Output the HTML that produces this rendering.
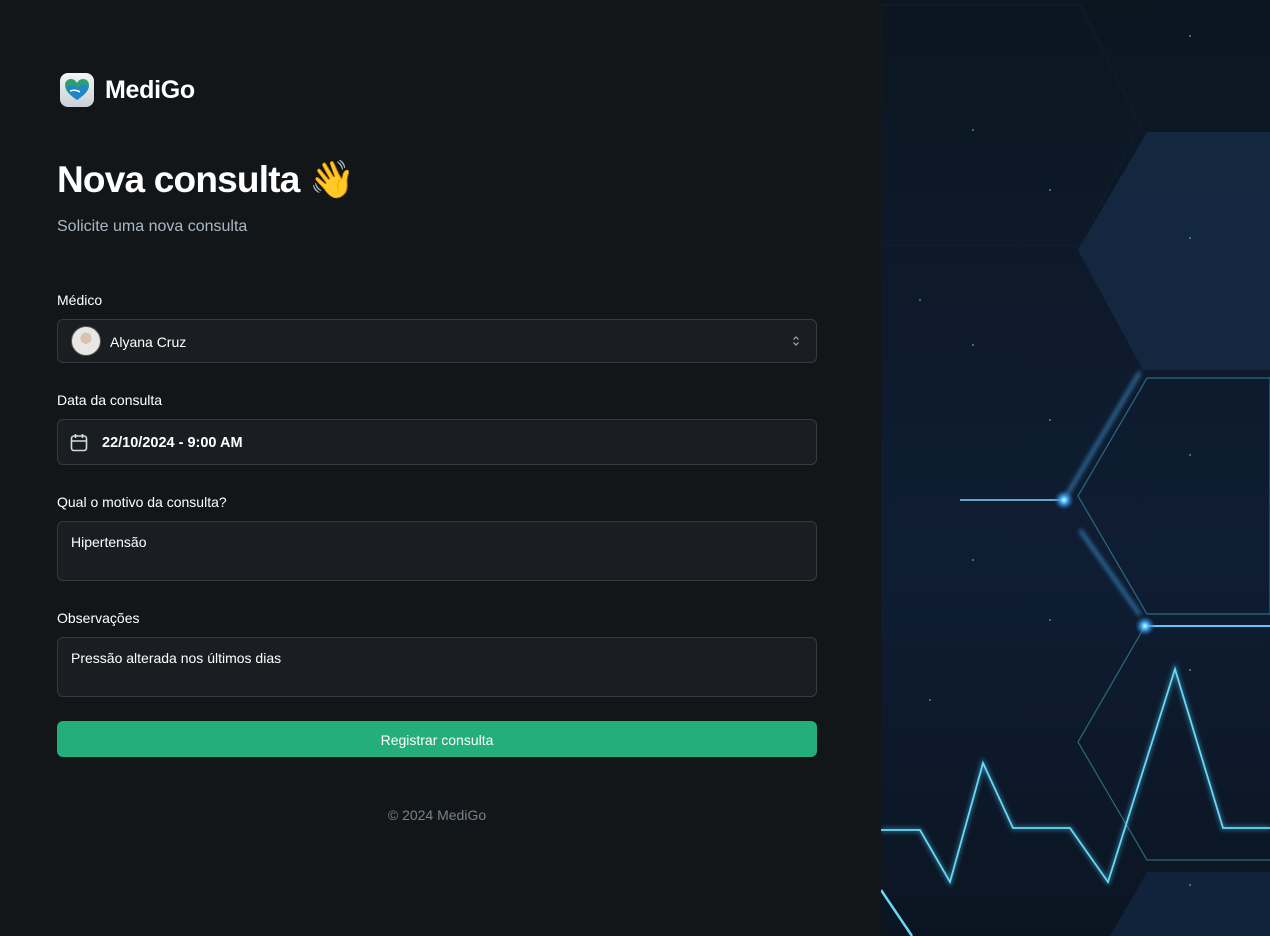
<!DOCTYPE html>
<html><head><meta charset="utf-8">
<style>
*{box-sizing:border-box;margin:0;padding:0}
html,body{width:1270px;height:936px;overflow:hidden}
body{background:#131619;font-family:"Liberation Sans",sans-serif;color:#fff;position:relative}
.left{position:absolute;left:0;top:0;width:881px;height:936px;background:#131619}
.logo{position:absolute;left:60px;top:73px;display:flex;align-items:center}
.logo .ic{width:34px;height:34px;border-radius:8px;background:linear-gradient(#f4f6f8,#c9d0d6);display:flex;align-items:center;justify-content:center}
.logo span{font-size:25px;font-weight:bold;margin-left:11px;letter-spacing:-0.3px}
h1{position:absolute;left:57px;top:159px;font-size:37px;font-weight:bold;letter-spacing:-0.8px}
.sub{position:absolute;left:57px;top:218px;font-size:16px;color:#abb8c4}
.lbl{position:absolute;left:57px;font-size:14px;color:#fff;font-weight:500}
.box{position:absolute;left:57px;width:760px;background:#1a1d21;border:1px solid #363a3d;border-radius:6px;font-size:14px;color:#fff}
.btn{position:absolute;left:57px;top:721px;width:760px;height:36px;background:#24ae7c;border-radius:6px;font-size:14px;display:flex;align-items:center;justify-content:center;padding-top:2px}
.foot{position:absolute;left:0;width:874px;top:807px;text-align:center;font-size:14px;color:#76828d}
.right{position:absolute;left:881px;top:0;width:389px;height:936px;background:#0d1a2a}
</style></head><body>
<div class="left">
<div class="logo"><div class="ic"><svg width="26" height="24" viewBox="0 0 26 24"><path d="M13 22 C6 17 1 13 1 7 C1 3 4 1 7 1 C10 1 12 3 13 5 C14 3 16 1 19 1 C22 1 25 3 25 7 C25 13 20 17 13 22Z" fill="#2f9e6e"/><path d="M2 9 C6 7 10 7 14 9 L20 6 C22 8 24 9 25 8 C24 14 19 18 13 22 C9 19 5 16 3 12Z" fill="#1f87c8"/><path d="M6 13 C9 12 13 12 16 14" stroke="#fff" stroke-width="1.5" fill="none"/></svg></div><span>MediGo</span></div>
<h1>Nova consulta 👋</h1>
<div class="sub">Solicite uma nova consulta</div>

<div class="lbl" style="top:292px">Médico</div>
<div class="box" style="top:319px;height:44px;display:flex;align-items:center;padding-left:13px">
<div style="width:30px;height:30px;border-radius:50%;background:radial-gradient(circle at 50% 40%,#d9c2ae 0 25%,#e9e7e4 26%);border:1px solid #555"></div>
<span style="margin-left:9px;padding-top:2px">Alyana Cruz</span>
<svg style="position:absolute;right:16px;top:15px" width="8" height="12" viewBox="0 0 8 12"><path d="M1.5 4.5L4 2 6.5 4.5M1.5 7.5L4 10 6.5 7.5" stroke="#aaa" stroke-width="1.2" fill="none"/></svg>
</div>

<div class="lbl" style="top:392px">Data da consulta</div>
<div class="box" style="top:419px;height:46px;display:flex;align-items:center;padding-left:12px">
<svg width="18" height="19" viewBox="0 0 18 19"><rect x="1.5" y="3" width="15" height="14.5" rx="2.5" stroke="#cfe0d8" stroke-width="1.6" fill="none"/><path d="M1.5 8H16.5M5.5 1V5M12.5 1V5" stroke="#cfe0d8" stroke-width="1.6"/></svg>
<span style="margin-left:14px;font-weight:bold;font-size:14.5px;padding-top:2px">22/10/2024 - 9:00 AM</span>
</div>

<div class="lbl" style="top:494px">Qual o motivo da consulta?</div>
<div class="box" style="top:521px;height:60px;padding:12px 13px">Hipertensão</div>

<div class="lbl" style="top:610px">Observações</div>
<div class="box" style="top:637px;height:60px;padding:12px 13px">Pressão alterada nos últimos dias</div>

<div class="btn">Registrar consulta</div>
<div class="foot">© 2024 MediGo</div>
</div>

<div class="right">
<svg width="389" height="936" viewBox="881 0 389 936">
<defs>
<linearGradient id="bg" x1="0" y1="0" x2="0" y2="1"><stop offset="0" stop-color="#0c1621"/><stop offset=".6" stop-color="#0f1d33"/><stop offset="1" stop-color="#0b1522"/></linearGradient>
<filter id="gl"><feGaussianBlur stdDeviation="2.5"/></filter>
<radialGradient id="dot"><stop offset="0" stop-color="#e8f8ff"/><stop offset=".3" stop-color="#4fb8ff"/><stop offset="1" stop-color="#1e5fb0" stop-opacity="0"/></radialGradient>
</defs>
<rect x="881" y="0" width="389" height="936" fill="url(#bg)"/>
<polygon points="1147,132 1270,132 1270,370 1143,370 1078,250" fill="#142a42" opacity=".9"/>
<polygon points="1147,872 1270,872 1270,936 1110,936" fill="#11233a"/>
<polygon points="881,5 1080,5 1140,125 1080,245 881,245" fill="none" stroke="#111f30" stroke-width="1"/>
<polygon points="1147,378 1270,378 1270,614 1147,614 1078,496" fill="none" stroke="#2a6a80" stroke-width="1.2"/>
<polyline points="1270,860 1147,860 1078,742 1145,626" fill="none" stroke="#2e6a76" stroke-width="1.2"/>
<g stroke="#4ab8ff" fill="none">
<line x1="900" y1="500" x2="1064" y2="500" stroke-width="3" filter="url(#gl)"/>
<line x1="960" y1="500" x2="1064" y2="500" stroke-width="1.5" stroke="#7fd4ff"/>
<line x1="1064" y1="500" x2="1140" y2="372" stroke-width="2" filter="url(#gl)"/>
<line x1="1080" y1="530" x2="1140" y2="615" stroke-width="2" filter="url(#gl)"/>
<line x1="1145" y1="626" x2="1270" y2="626" stroke-width="2" stroke="#5ac8ff"/>
</g>
<circle cx="1064" cy="500" r="10" fill="url(#dot)"/>
<circle cx="1145" cy="626" r="10" fill="url(#dot)"/>
<g fill="none" stroke-linejoin="miter">
<polyline points="881,830 920,830 950,882 983,763 1013,828 1070,828 1108,882 1175,669 1223,828 1270,828" stroke="#3fbfe8" stroke-width="4" opacity=".5" filter="url(#gl)"/>
<polyline points="881,830 920,830 950,882 983,763 1013,828 1070,828 1108,882 1175,669 1223,828 1270,828" stroke="#6ad8f5" stroke-width="1.8"/>
<line x1="881" y1="890" x2="912" y2="936" stroke="#6ad8f5" stroke-width="2.5"/>
</g>
<g fill="#5fb8c8" opacity=".7">
<circle cx="1190" cy="36" r="1"/><circle cx="973" cy="130" r="1"/><circle cx="1190" cy="238" r="1"/><circle cx="1050" cy="190" r="1"/><circle cx="973" cy="345" r="1"/><circle cx="1190" cy="455" r="1"/><circle cx="1050" cy="420" r="1"/><circle cx="973" cy="560" r="1"/><circle cx="1190" cy="670" r="1"/><circle cx="1050" cy="620" r="1"/><circle cx="1190" cy="885" r="1"/><circle cx="920" cy="300" r="1"/><circle cx="930" cy="700" r="1"/>
</g>
</svg>
</div>
</body></html>
